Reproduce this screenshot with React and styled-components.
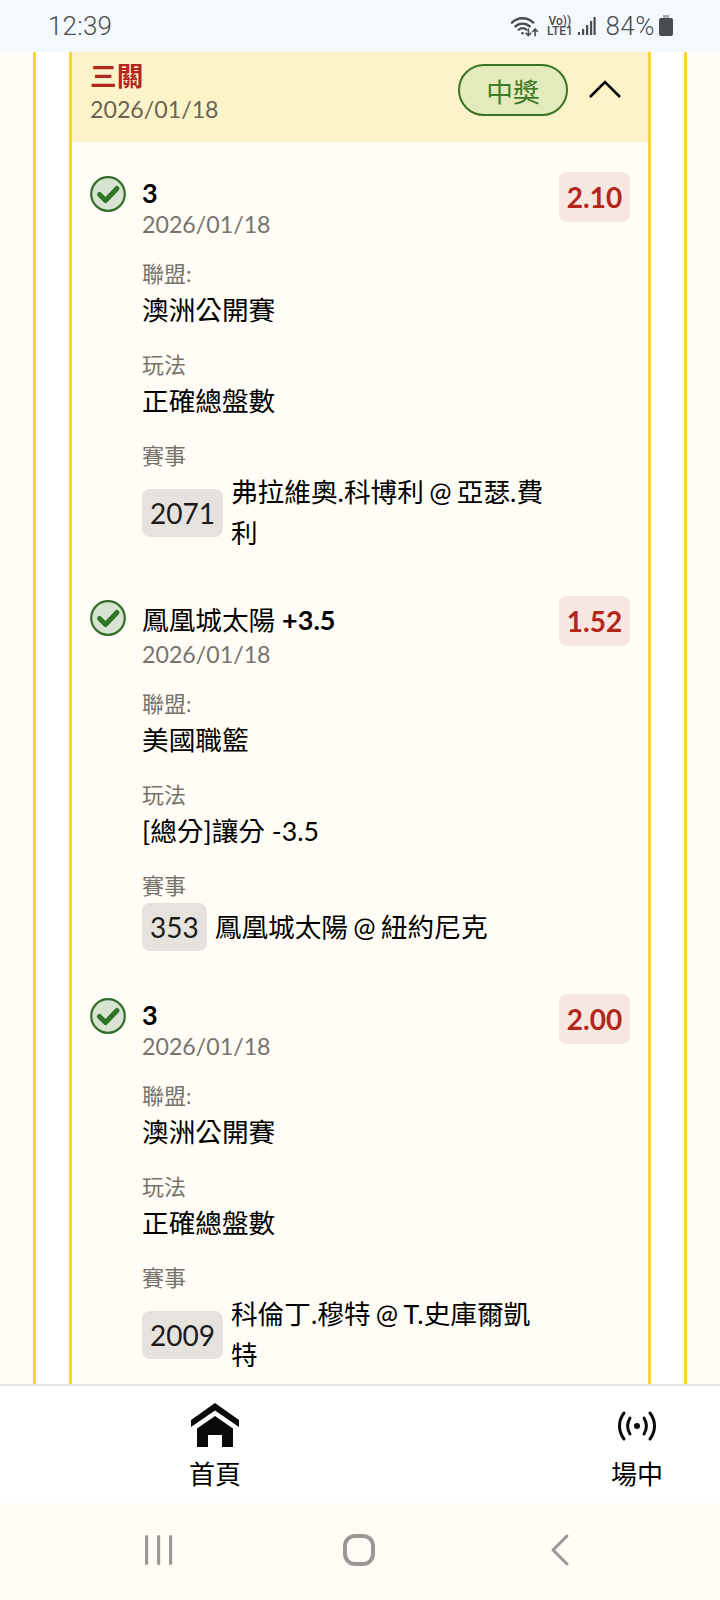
import React from "react";
import styled, { createGlobalStyle } from "styled-components";

const Global = createGlobalStyle`
  html, body { margin: 0; padding: 0; background: #fffdf6; }
  * { box-sizing: border-box; }
  body { font-family: Lato, "Noto Sans CJK TC", sans-serif; }
`;

const Screen = styled.div`
  width: 720px; height: 1600px; display: flex; flex-direction: column; overflow: hidden; background: #fffdf6;
`;
const StatusBar = styled.div`
  height: 52px; flex: none; background: #f4f9fe; display: flex; align-items: center; justify-content: space-between;
  padding: 0 47px 0 48px; color: #4a4d50; font-family: Roboto, sans-serif;
`;
const Clock = styled.span` font-size: 26px; letter-spacing: .2px; font-weight: 300; `;
const StatusRight = styled.div` display: flex; align-items: center; `;
const Lte = styled.div`
  display: flex; flex-direction: column; align-items: center; font-size: 12px; line-height: 10px; font-weight: 500; margin: 0 6px 0 8px; width: 25px;
`;
const Battery = styled.span` font-size: 26px; margin-left: 9px; letter-spacing: .5px; font-weight: 300; `;
const Main = styled.div`
  flex: 1; min-height: 0; overflow: hidden; padding: 0 33px;
`;
const Outer = styled.div`
  background: #fff; border-left: 3px solid #fbd433; border-right: 3px solid #fbd433; padding: 0 33px; height: 100%;
`;
const Card = styled.div`
  background: #fffdf6; border-left: 3px solid #fbd433; border-right: 3px solid #fbd433; height: 100%;
`;
const Head = styled.div`
  height: 90px; background: #fdf3c8; display: flex; align-items: flex-start; padding: 9px 26px 0 18px;
`;
const HeadText = styled.div` flex: 1; `;
const HeadTitle = styled.div` font-size: 26.67px; line-height: 30px; font-weight: 700; color: #b3261e; `;
const HeadDate = styled.div` font-size: 23.2px; line-height: 32px; color: #6b6455; margin-top: 2px; `;
const Badge = styled.div`
  width: 110px; height: 52px; margin-top: 3px; border-radius: 26px; border: 2px solid #3a7325; background: #e3eabb; color: #3f7a28;
  font-size: 26.67px; display: flex; align-items: center; justify-content: center;
`;
const Chevron = styled.svg` width: 34px; height: 24px; margin: 16px 0 0 20px; `;
const List = styled.div` padding: 30px 18px 0 18px; display: flex; flex-direction: column; gap: 42px; `;
const Leg = styled.div` display: flex; position: relative; `;
const Check = styled.svg` width: 36px; height: 36px; flex: none; margin-top: 4px; `;
const LegBody = styled.div` flex: 1; margin-left: 16px; min-width: 0; `;
const Title = styled.div`
  font-size: 26.67px; line-height: ${(p) => (p.$cjk ? "43px" : "38px")}; color: #000; padding-top: 2px;
  b { font-weight: 700; font-size: 27px; }
`;
const LegDate = styled.div` font-size: 23.2px; line-height: 26px; color: #77736c; margin: -1px 0 19px; `;
const Label = styled.div` font-size: 22px; line-height: 35px; color: #77736c; `;
const Value = styled.div` font-size: 26.67px; line-height: 38px; color: #000; margin-bottom: 18px; `;
const MatchRow = styled.div` display: flex; align-items: center; width: 407px; min-height: 50px; margin-top: -1px; `;
const Code = styled.span`
  flex: none; height: 48px; padding: 0 8px; border-radius: 8px; background: #e6e3de; font-size: 28px; line-height: 48px; color: #1c1b1a; margin-right: 8px;
`;
const MatchName = styled.span` font-size: 26.67px; line-height: 41px; color: #000; word-spacing: -1.5px; `;
const Odds = styled.div`
  position: absolute; right: 0; top: 0; width: 71px; height: 50px; border-radius: 8px; background: #f6e7e0; color: #b3261e;
  font-size: 28px; font-weight: 700; display: flex; align-items: center; justify-content: center;
`;
const Nav = styled.div`
  flex: none; height: 119px; background: #fff; border-top: 2px solid #e6e6e6; display: flex; justify-content: space-between; padding: 15px 57px 0 189px;
`;
const NavItem = styled.div` display: flex; flex-direction: column; align-items: center; width: 52px; `;
const NavIcon = styled.svg` width: 52px; height: 48px; flex: none; `;
const NavLabel = styled.div` font-size: 26px; line-height: 36px; color: #000; margin-top: 7px; white-space: nowrap; `;
const SysNav = styled.div`
  flex: none; height: 97px; background: #fffdf6; display: flex; align-items: center; padding-bottom: 3px;
`;
const SysIcon = styled.svg` height: 36px; width: 40px; `;

const CheckIcon = () => (
  <Check viewBox="0 0 36 36">
    <circle cx="18" cy="18" r="16.8" fill="#d8e3d2" stroke="#356e2a" strokeWidth="2.2" />
    <path d="M9.5 18.5l6 6L27 12.5" fill="none" stroke="#2f7527" strokeWidth="5" strokeLinecap="round" strokeLinejoin="round" />
  </Check>
);

const legs = [
  { title: <b>3</b>, odds: "2.10", league: "澳洲公開賽", play: "正確總盤數", code: "2071", name: "弗拉維奧.科博利 @ 亞瑟.費利" },
  { cjk: true, title: <>鳳凰城太陽 <b>+3.5</b></>, odds: "1.52", league: "美國職籃", play: "[總分]讓分 -3.5", code: "353", name: "鳳凰城太陽 @ 紐約尼克" },
  { title: <b>3</b>, odds: "2.00", league: "澳洲公開賽", play: "正確總盤數", code: "2009", name: "科倫丁.穆特 @ T.史庫爾凱特" },
];

export default function App() {
  return (
    <Screen>
      <Global />
      <StatusBar>
        <Clock>12:39</Clock>
        <StatusRight>
          <svg width="29" height="24" viewBox="0 0 30 24" fill="none" stroke="#4a4d50" strokeLinecap="round">
            <path d="M2 8.5C8 2.5 18 2.5 24 8.5" strokeWidth="2.4" />
            <path d="M5.5 12.5C9.5 8.5 16.5 8.5 20.5 12.5" strokeWidth="2.4" />
            <path d="M9 16c2.4-2.4 5.6-2.4 8 0" strokeWidth="2.2" />
            <circle cx="13" cy="19.5" r="1.4" fill="#4a4d50" stroke="none" />
            <path d="M19 15v7m-2.4-2.6L19 22l2.4-2.6M26 22v-7m-2.4 2.6L26 15l2.4 2.6" strokeWidth="1.6" />
          </svg>
          <Lte><span>Vo))</span><span>LTE1</span></Lte>
          <svg width="18" height="22" viewBox="0 0 18 22" fill="#4a4d50">
            <rect x="0" y="17" width="2" height="3" /><rect x="4" y="14" width="2.2" height="6" /><rect x="8" y="10" width="2.2" height="10" /><rect x="12" y="6" width="2.2" height="14" /><rect x="15.5" y="2" width="2.2" height="18" />
          </svg>
          <Battery>84%</Battery>
          <svg width="14" height="22" viewBox="0 0 14 22" fill="#4a4d50" style={{ marginLeft: 4 }}>
            <rect x="4" y="0" width="6" height="3" fill="#a9abad" /><rect x="0" y="3" width="14" height="18" rx="2" />
          </svg>
        </StatusRight>
      </StatusBar>
      <Main>
        <Outer>
          <Card>
            <Head>
              <HeadText>
                <HeadTitle>三關</HeadTitle>
                <HeadDate>2026/01/18</HeadDate>
              </HeadText>
              <Badge>中獎</Badge>
              <Chevron viewBox="0 0 34 24"><path d="M2 20L17 5l15 15" fill="none" stroke="#000" strokeWidth="2.6" /></Chevron>
            </Head>
            <List>
              {legs.map((l) => (
                <Leg key={l.code}>
                  <CheckIcon />
                  <LegBody>
                    <Title $cjk={l.cjk}>{l.title}</Title>
                    <LegDate>2026/01/18</LegDate>
                    <Label>聯盟:</Label>
                    <Value>{l.league}</Value>
                    <Label>玩法</Label>
                    <Value>{l.play}</Value>
                    <Label>賽事</Label>
                    <MatchRow>
                      <Code>{l.code}</Code>
                      <MatchName>{l.name}</MatchName>
                    </MatchRow>
                  </LegBody>
                  <Odds>{l.odds}</Odds>
                </Leg>
              ))}
            </List>
          </Card>
        </Outer>
      </Main>
      <Nav>
        <NavItem>
          <NavIcon viewBox="0 0 52 48">
            <path d="M26 2L50 19v7L26 9.5 2 26v-7z" fill="#0a0a0a" />
            <path d="M26 15l18 12.5V46H33V34H19v12H8V27.5z" fill="#0a0a0a" />
          </NavIcon>
          <NavLabel>首頁</NavLabel>
        </NavItem>
        <NavItem>
          <NavIcon viewBox="0 0 52 48" fill="none" stroke="#0a0a0a" strokeWidth="3" strokeLinecap="round">
            <circle cx="26" cy="25" r="3" fill="#0a0a0a" stroke="none" />
            <path d="M19 17c-3 5-3 11 0 16M33 17c3 5 3 11 0 16" />
            <path d="M13 12c-6 8-6 18 0 26M39 12c6 8 6 18 0 26" />
          </NavIcon>
          <NavLabel>場中</NavLabel>
        </NavItem>
      </Nav>
      <SysNav>
        <SysIcon viewBox="0 0 40 36" style={{ marginLeft: 138 }} fill="#9a9892">
          <rect x="7" y="3" width="3.2" height="30" rx="1.5" /><rect x="19" y="3" width="3.2" height="30" rx="1.5" /><rect x="31" y="3" width="3.2" height="30" rx="1.5" />
        </SysIcon>
        <SysIcon viewBox="0 0 40 36" style={{ marginLeft: 161 }} fill="none" stroke="#9a9892" strokeWidth="4">
          <rect x="6" y="4" width="28" height="28" rx="10" />
        </SysIcon>
        <SysIcon viewBox="0 0 40 36" style={{ marginLeft: 161 }} fill="none" stroke="#9a9892" strokeWidth="3" strokeLinecap="round" strokeLinejoin="round">
          <path d="M27 4L13 18l14 14" />
        </SysIcon>
      </SysNav>
    </Screen>
  );
}
